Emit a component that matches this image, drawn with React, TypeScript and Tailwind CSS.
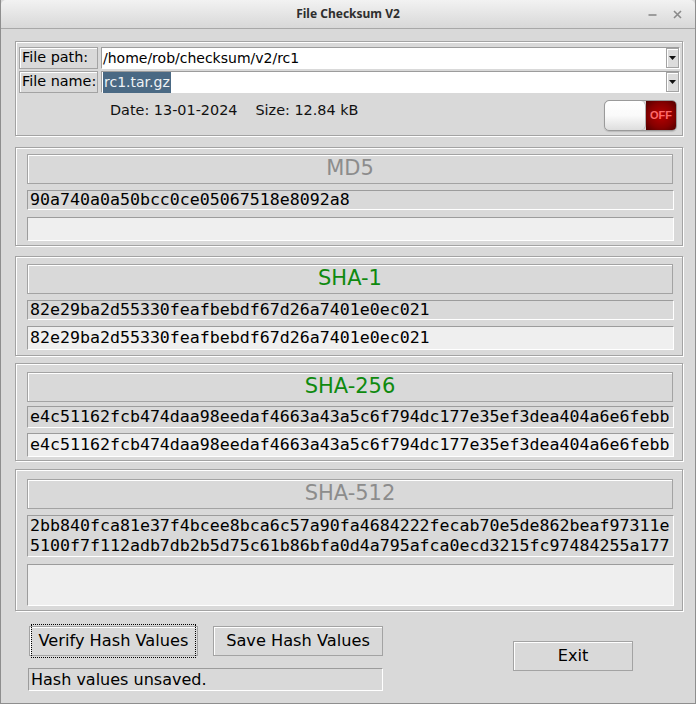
import React from "react";

const sans = { fontFamily: '"DejaVu Sans", Verdana, sans-serif' };
const mono = { fontFamily: '"DejaVu Sans Mono", "Liberation Mono", monospace' };

// tk style borders
const groove = "border border-[#a3a3a3] shadow-[inset_1px_1px_0_#ffffff,1px_1px_0_#ffffff]";
const sunken = "border-t border-l border-t-[#9c9c9c] border-l-[#9c9c9c] border-b border-r border-b-[#ffffff] border-r-[#ffffff]";
const raised = "border border-[#a3a3a3] shadow-[inset_1px_1px_0_#ffffff]";

const hashes = {
  md5: "90a740a0a50bcc0ce05067518e8092a8",
  sha1: "82e29ba2d55330feafbebdf67d26a7401e0ec021",
  sha256: "e4c51162fcb474daa98eedaf4663a43a5c6f794dc177e35ef3dea404a6e6febb",
  sha512a: "2bb840fca81e37f4bcee8bca6c57a90fa4684222fecab70e5de862beaf97311e",
  sha512b: "5100f7f112adb7db2b5d75c61b86bfa0d4a795afca0ecd3215fc97484255a177",
};

function TitleBar() {
  return (
    <div className="relative h-[29px] flex items-center justify-center bg-gradient-to-b from-[#f2f2f2] to-[#d8d8d8] border-b border-[#a8a8a8] rounded-t-[5px]">
      <span className="text-[12px] font-bold text-[#2e2e2e]" style={{ fontFamily: '"Noto Sans", "Open Sans", sans-serif' }}>
        File Checksum V2
      </span>
      <div className="absolute right-[13px] top-[10px] flex items-center gap-[16px]">
        <svg width="9" height="9" viewBox="0 0 9 9">
          <line x1="0.5" y1="5" x2="8.5" y2="5" stroke="#8a8a8a" strokeWidth="1.6" />
        </svg>
        <svg width="9" height="9" viewBox="0 0 9 9">
          <path d="M1 1 L8 8 M8 1 L1 8" stroke="#8a8a8a" strokeWidth="1.6" />
        </svg>
      </div>
    </div>
  );
}

function Combo({ label, value, selected }: { label: string; value: string; selected?: boolean }) {
  return (
    <div className="flex items-center h-[22px] gap-[3px]">
      <div className={`w-[79px] h-[22px] ${raised} flex items-center pl-[2px] text-[14.4px] text-black whitespace-nowrap`}>{label}</div>
      <div className={`flex-1 h-[22px] flex ${sunken} bg-white`}>
        <div className="flex-1 flex items-center pl-[1px] text-[14px] text-black whitespace-nowrap">
          {selected ? <span className="bg-[#4a6984] text-[#eef2f5] px-[1px]">{value}</span> : value}
        </div>
        <div className={`w-[13px] bg-[#dcdcdc] ${raised} flex items-center justify-center`}>
          <svg width="7" height="4" viewBox="0 0 7 4">
            <path d="M0 0 H7 L3.5 4 Z" fill="#111" />
          </svg>
        </div>
      </div>
    </div>
  );
}

function Toggle() {
  return (
    <div className="w-[73px] h-[31px] rounded-[5px] border border-[#9a9a9a] flex overflow-hidden shadow-[0_1px_1px_#bbb]">
      <div className="w-[41px] h-full bg-gradient-to-b from-[#ffffff] via-[#fafafa] to-[#dedede] rounded-[5px] border-r border-[#b0b0b0]" />
      <div className="flex-1 h-full flex items-center justify-center bg-[radial-gradient(ellipse_at_center,#b80000_0%,#860000_60%,#4e0000_100%)]">
        <span className="text-[11px] font-bold text-[#ff6a6a]" style={{ fontFamily: '"Liberation Sans", Arial, sans-serif' }}>
          OFF
        </span>
      </div>
    </div>
  );
}

function Section({
  title,
  color,
  lines,
  hashH,
  entry,
  entryH,
  className,
}: {
  title: string;
  color: string;
  lines: string[];
  hashH: string;
  entry?: string;
  entryH: string;
  className: string;
}) {
  return (
    <div className={`ml-[14px] mr-[12px] ${groove} pl-[11px] pr-[8px] flex flex-col ${className}`}>
      <div className={`h-[30px] mr-[1px] ${raised} flex items-center justify-center text-[21px]`} style={{ color }}>
        {title}
      </div>
      <div
        className={`${hashH} ${sunken} bg-[#d9d9d9] pl-[2px] flex flex-col justify-center text-[16.6px] leading-[20px] text-black whitespace-pre`}
        style={mono}
      >
        {lines.map((l) => (
          <div key={l}>{l}</div>
        ))}
      </div>
      <div className={`${entryH} ${sunken} bg-[#efefef] pl-[2px] flex items-center text-[16.6px] text-black whitespace-pre`} style={mono}>
        {entry}
      </div>
    </div>
  );
}

function TkButton({ children, className, focus }: { children: React.ReactNode; className: string; focus?: boolean }) {
  return (
    <div className={`${raised} flex items-center justify-center text-[16.2px] text-black ${className}`}>
      <div className={`px-[3px] ${focus ? "outline outline-1 outline-dotted outline-black outline-offset-[4px]" : ""}`}>{children}</div>
    </div>
  );
}

export default function App() {
  return (
    <div className="w-[696px] h-[704px] bg-[#d9d9d9] flex flex-col border-x border-b border-[#8e8e8e]" style={sans}>
      <TitleBar />

      <div className={`ml-[14px] mr-[12px] mt-[12px] h-[95px] ${groove} pl-[3px] pr-[2px] pt-[5px] flex flex-col gap-[2px]`}>
        <div className="flex flex-col gap-[2px]">
          <Combo label="File path:" value="/home/rob/checksum/v2/rc1" />
          <Combo label="File name:" value="rc1.tar.gz" selected />
        </div>
        <div className="flex items-start">
          <div className="ml-[91px] mt-[5px] flex gap-[18px] text-[14.4px] text-[#111]">
            <span>Date: 13-01-2024</span>
            <span>Size: 12.84 kB</span>
          </div>
          <div className="ml-auto mr-[3px] mt-[5px]">
            <Toggle />
          </div>
        </div>
      </div>

      <Section
        className="mt-[11px] h-[99px] pt-[6px] gap-[6px]"
        title="MD5"
        color="#8c8c8c"
        lines={[hashes.md5]}
        hashH="h-[20px]"
        entryH="h-[24px] mt-[1px]"
      />
      <Section
        className="mt-[10px] h-[100px] pt-[7px] gap-[6px]"
        title="SHA-1"
        color="#0f8a0f"
        lines={[hashes.sha1]}
        hashH="h-[20px]"
        entry={hashes.sha1}
        entryH="h-[24px]"
      />
      <Section
        className="mt-[7px] h-[98px] pt-[8px] gap-[4px]"
        title="SHA-256"
        color="#0f8a0f"
        lines={[hashes.sha256]}
        hashH="h-[22px]"
        entry={hashes.sha256}
        entryH="h-[24px] mt-[1px]"
      />
      <Section
        className="mt-[8px] h-[142px] pt-[9px] gap-[6px]"
        title="SHA-512"
        color="#8c8c8c"
        lines={[hashes.sha512a, hashes.sha512b]}
        hashH="h-[42px]"
        entryH="h-[42px] mt-[1px]"
      />

      <div className="flex">
        <div className="ml-[27px] w-[355px] pt-[15px] flex flex-col">
          <div className="flex gap-[15px]">
            <TkButton className="w-[169px] h-[30px] ml-[1px]" focus>
              Verify Hash Values
            </TkButton>
            <TkButton className="w-[170px] h-[30px]">Save Hash Values</TkButton>
          </div>
          <div className={`mt-[12px] h-[23px] ${sunken} border border-[#a0a0a0] flex items-center pl-[2px] text-[16px] text-black`}>
            Hash values unsaved.
          </div>
        </div>
        <TkButton className="ml-[130px] mt-[30px] w-[120px] h-[30px]">Exit</TkButton>
      </div>
    </div>
  );
}
